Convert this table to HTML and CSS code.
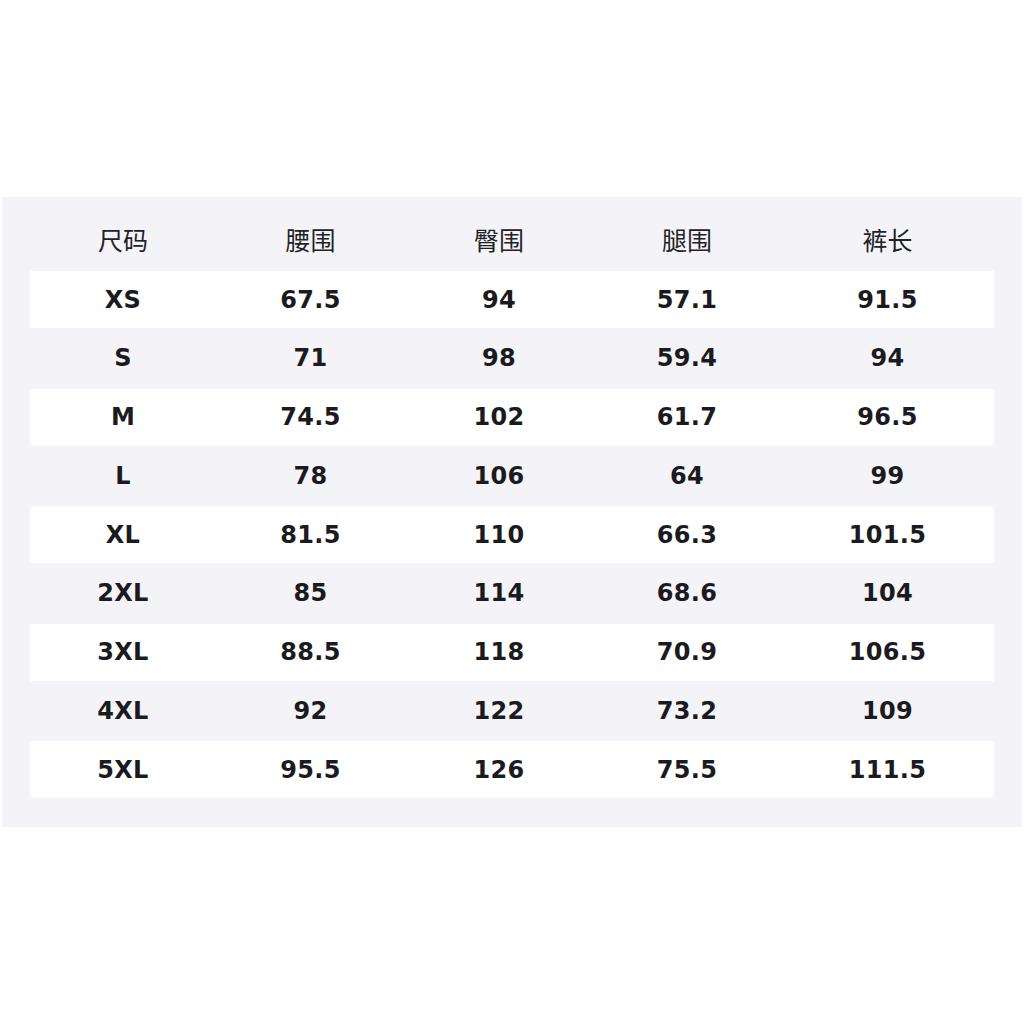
FILE: index.html
```html
<!DOCTYPE html>
<html lang="zh">
<head>
<meta charset="utf-8">
<link rel="stylesheet" href="styles.css">
</head>
<body>
<div class="page">
  <div class="panel">
    <div class="row head">
      <div>尺码</div><div>腰围</div><div>臀围</div><div>腿围</div><div>裤长</div>
    </div>
    <div class="row odd"><div>XS</div><div>67.5</div><div>94</div><div>57.1</div><div>91.5</div></div>
    <div class="row even"><div>S</div><div>71</div><div>98</div><div>59.4</div><div>94</div></div>
    <div class="row odd"><div>M</div><div>74.5</div><div>102</div><div>61.7</div><div>96.5</div></div>
    <div class="row even"><div>L</div><div>78</div><div>106</div><div>64</div><div>99</div></div>
    <div class="row odd"><div>XL</div><div>81.5</div><div>110</div><div>66.3</div><div>101.5</div></div>
    <div class="row even"><div>2XL</div><div>85</div><div>114</div><div>68.6</div><div>104</div></div>
    <div class="row odd"><div>3XL</div><div>88.5</div><div>118</div><div>70.9</div><div>106.5</div></div>
    <div class="row even"><div>4XL</div><div>92</div><div>122</div><div>73.2</div><div>109</div></div>
    <div class="row odd"><div>5XL</div><div>95.5</div><div>126</div><div>75.5</div><div>111.5</div></div>
  </div>
</div>
</body>
</html>
```
FILE: styles.css
```css
html, body {
  margin: 0;
  padding: 0;
  background: #ffffff;
}
.page {
  width: 1024px;
  height: 1024px;
  padding-top: 197px;
  padding-left: 2px;
  box-sizing: border-box;
}
.panel {
  width: 1020px;
  height: 630px;
  background: #f4f4f8;
  padding: 0 28px 0 28px;
  box-sizing: border-box;
}
.row {
  display: grid;
  grid-template-columns: 186px 189px 188px 188px 213px;
  align-items: center;
  text-align: center;
  color: #1b1b1f;
}
.head {
  height: 74px;
  padding-top: 10px;
  box-sizing: border-box;
  font-family: "Noto Sans CJK SC", sans-serif;
  font-size: 25px;
  font-weight: 400;
  color: #222226;
}
.odd, .even {
  font-family: "DejaVu Sans", sans-serif;
  font-weight: bold;
  font-size: 24px;
  letter-spacing: 0.3px;
}
.odd {
  height: 57px;
  background: #ffffff;
}
.even {
  height: 60.5px;
}
```
